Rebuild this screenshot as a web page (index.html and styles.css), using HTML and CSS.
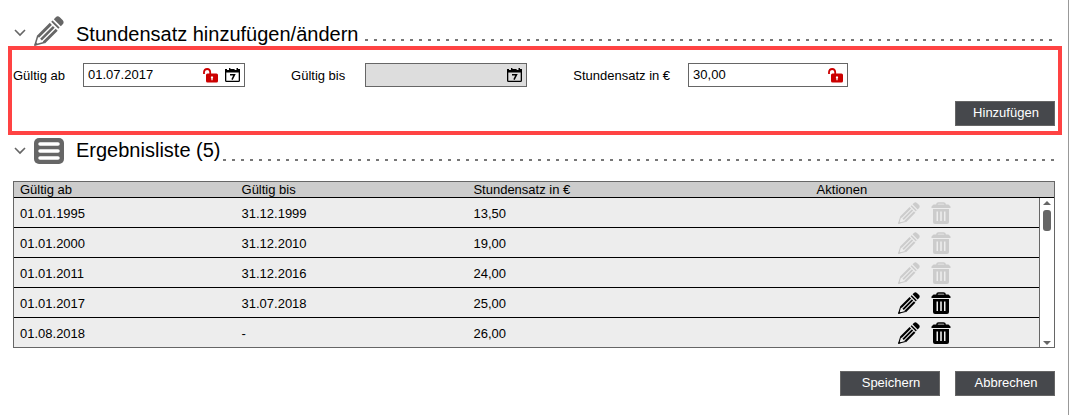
FILE: index.html
```html
<!DOCTYPE html>
<html lang="de">
<head>
<meta charset="utf-8">
<title>Stundensatz</title>
<link rel="stylesheet" href="styles.css">
</head>
<body>
<svg class="defs" aria-hidden="true">
  <symbol id="pencil" viewBox="0 0 30 30">
    <path fill="currentColor" d="M19.800 3.200 22 1Q23.800-.5 25.800 1.200L28.800 4.200Q30.300 6 29 8L26.800 10.200ZM18.600 4.400 25.600 11.400 24.300 12.800 17.200 5.700ZM15.800 6.800 17.900 8.900 5 21.800 2.900 19.700ZM18.900 9.900 20.700 11.700 7.900 24.500 6.100 22.700ZM21.700 12.700 23.700 14.700 10.900 27.500 8.800 25.400Z"/>
    <path fill="none" stroke="currentColor" stroke-width="1.500" stroke-linejoin="round" d="M3.700 20 1 29 10.200 26.600"/>
    <path fill="currentColor" d="M1.600 26 4 28.500 0 30Z"/>
  </symbol>
  <symbol id="trash" viewBox="0 0 20 22">
    <path fill="none" stroke="currentColor" stroke-width="1.500" d="M6 3V2Q6 1 7.500 1H12.500Q14 1 14 2V3"/>
    <path fill="currentColor" fill-rule="evenodd" d="M2.500 2.500H17.500L19.500 4.500V6H.500V4.500ZM2 7H18V20Q18 22 16 22H4Q2 22 2 20ZM5.500 9.500V19H7V9.500ZM9.200 9.500V19H10.800V9.500ZM13 9.500V19H14.500V9.500Z"/>
  </symbol>
  <symbol id="chevron" viewBox="0 0 12 8">
    <path fill="none" stroke="currentColor" stroke-width="1.600" d="M1 1 6 6 11 1"/>
  </symbol>
  <symbol id="lock" viewBox="0 0 15 15">
    <path fill="none" stroke="currentColor" stroke-width="1.800" d="M1 6V4Q1.300 1 4.200 1Q7 1 7.200 4V6"/>
    <path fill="currentColor" fill-rule="evenodd" d="M4.500 5.500H13.500Q15 5.500 15 7V13Q15 14.500 13.500 14.500H4.500Q3 14.500 3 13V7Q3 5.500 4.500 5.500ZM9 8.300A1.200 1.200 0 0 0 8.400 10.500V12.300H9.600V10.500A1.200 1.200 0 0 0 9 8.300Z"/>
  </symbol>
  <symbol id="calendar" viewBox="0 0 15 14">
    <path fill="currentColor" fill-rule="evenodd" d="M0 1H2V2H4V0H5.400V1H9.600V2H11.500V0H13V1H15V12.500Q15 14 13.500 14H1.500Q0 14 0 12.500ZM1.300 4.500V12.700H13.700V4.500Z"/>
    <path fill="none" stroke="currentColor" stroke-width="1.500" d="M5 6.700H9.500L7 11.700"/>
  </symbol>
</svg>
<main class="page">
  <header class="section-head">
    <button class="toggle" type="button" aria-label="Abschnitt einklappen"><svg><use href="#chevron"/></svg></button>
    <svg class="section-icon"><use href="#pencil"/></svg>
    <h2 class="title">Stundensatz hinzufügen/ändern</h2>
    <span class="dots dots-spaced"></span>
  </header>

  <form class="editor">
    <div class="fields">
      <label for="from">Gültig ab</label>
      <div class="field">
        <input id="from" type="text" value="01.07.2017">
        <svg class="lock"><use href="#lock"/></svg>
        <button class="pick" type="button" aria-label="Kalender"><svg><use href="#calendar"/></svg></button>
      </div>
      <label for="to">Gültig bis</label>
      <div class="field field-off">
        <input id="to" type="text" disabled>
        <button class="pick" type="button" aria-label="Kalender"><svg><use href="#calendar"/></svg></button>
      </div>
      <label for="rate">Stundensatz in €</label>
      <div class="field field-rate">
        <input id="rate" type="text" value="30,00">
        <svg class="lock"><use href="#lock"/></svg>
      </div>
    </div>
    <div class="buttons"><button class="btn" type="button">Hinzufügen</button></div>
  </form>

  <header class="section-head section-head-list">
    <button class="toggle" type="button" aria-label="Abschnitt einklappen"><svg><use href="#chevron"/></svg></button>
    <svg class="section-icon" viewBox="0 0 30 30">
      <rect x="0" y="2" width="30" height="26" rx="5" fill="#666"/>
      <path stroke="#fff" stroke-width="3.500" stroke-linecap="round" d="M6 8H24M6 15H24M6 22H24"/>
    </svg>
    <h2 class="title">Ergebnisliste (5)</h2>
    <span class="dots"></span>
  </header>

  <div class="list">
    <table class="rates">
      <thead>
        <tr><th class="col-from">Gültig ab</th><th class="col-to">Gültig bis</th><th class="col-rate">Stundensatz in €</th><th>Aktionen</th></tr>
      </thead>
      <tbody>
        <tr><td>01.01.1995</td><td>31.12.1999</td><td>13,50</td><td><div class="actions"><button type="button" disabled aria-label="Bearbeiten"><svg class="i-pencil"><use href="#pencil"/></svg></button><button type="button" disabled aria-label="Löschen"><svg class="i-trash"><use href="#trash"/></svg></button></div></td></tr>
        <tr><td>01.01.2000</td><td>31.12.2010</td><td>19,00</td><td><div class="actions"><button type="button" disabled aria-label="Bearbeiten"><svg class="i-pencil"><use href="#pencil"/></svg></button><button type="button" disabled aria-label="Löschen"><svg class="i-trash"><use href="#trash"/></svg></button></div></td></tr>
        <tr><td>01.01.2011</td><td>31.12.2016</td><td>24,00</td><td><div class="actions"><button type="button" disabled aria-label="Bearbeiten"><svg class="i-pencil"><use href="#pencil"/></svg></button><button type="button" disabled aria-label="Löschen"><svg class="i-trash"><use href="#trash"/></svg></button></div></td></tr>
        <tr><td>01.01.2017</td><td>31.07.2018</td><td>25,00</td><td><div class="actions"><button type="button" aria-label="Bearbeiten"><svg class="i-pencil"><use href="#pencil"/></svg></button><button type="button" aria-label="Löschen"><svg class="i-trash"><use href="#trash"/></svg></button></div></td></tr>
        <tr><td>01.08.2018</td><td>-</td><td>26,00</td><td><div class="actions"><button type="button" aria-label="Bearbeiten"><svg class="i-pencil"><use href="#pencil"/></svg></button><button type="button" aria-label="Löschen"><svg class="i-trash"><use href="#trash"/></svg></button></div></td></tr>
      </tbody>
    </table>
    <div class="scrollbar">
      <span class="arrow-up"></span>
      <span class="thumb"></span>
      <span class="arrow-down"></span>
    </div>
  </div>

  <div class="buttons buttons-page">
    <button class="btn" type="button">Speichern</button>
    <button class="btn" type="button">Abbrechen</button>
  </div>
</main>
</body>
</html>
```

FILE: styles.css
```css
* { box-sizing: border-box; }

body {
  margin: 0;
  background: #fff;
  color: #000;
  font: 13px/16px "Liberation Sans", Arial, sans-serif;
}

button, input { font: inherit; color: inherit; }
svg { display: block; }
.defs { position: absolute; width: 0; height: 0; }

.page {
  min-height: 100vh;
  padding: 14px 6px 0 8px;
  border-right: 1px solid #999;
}

/* section headings */
.section-head {
  display: flex;
  align-items: center;
  height: 32px;
  padding: 0 7px 0 6px;
}
.toggle {
  padding: 6px 0 0;
  border: 0;
  background: none;
  color: #666;
}
.toggle svg { width: 12px; height: 8px; }
.section-icon {
  width: 30px;
  height: 30px;
  margin: 2px 12px 0 8px;
  color: #666;
}
.title {
  margin: 8px 0 0;
  font-size: 20px;
  font-weight: 400;
  line-height: 24px;
}
.dots {
  flex: 1;
  align-self: flex-end;
  height: 2px;
  margin-bottom: 5px;
  margin-left: 2px;
  background: repeating-linear-gradient(90deg, #777 0 3px, transparent 3px 9px);
}
.dots-spaced { margin-left: 7px; }
.section-head-list { height: 31px; }
.section-head-list .toggle { padding-top: 0; }
.section-head-list .title { margin-top: -2px; }
.section-head-list .section-icon { margin-top: 0; }

/* entry form */
.editor {
  padding: 13px 3px 5px 1px;
  border: 4px solid #ff4343;
}
.fields {
  display: flex;
  align-items: center;
}
.fields label {
  flex: none;
  margin-right: 18px;
  padding-top: 2px;
}
.fields .field + label { margin-left: 46px; }
.fields label:nth-of-type(2) { margin-right: 20px; }
.field {
  display: flex;
  align-items: center;
  width: 162px;
  height: 24px;
  padding: 0 4px;
  gap: 7px;
  border: 1px solid #666;
  background: #fff;
}
.field-off { background: #ddd; }
.field-rate { width: 160px; }
.field input {
  flex: 1;
  min-width: 0;
  padding: 0;
  border: 0;
  outline: 0;
  background: none;
}
.lock { width: 15px; height: 15px; color: #c00; }
.pick { padding: 0; border: 0; background: none; }
.pick svg { width: 15px; height: 14px; }

/* buttons */
.buttons {
  display: flex;
  justify-content: flex-end;
  gap: 15px;
  margin-top: 14px;
}
.buttons-page { margin: 23px 7px 0 0; }
.btn {
  width: 100px;
  height: 25px;
  padding: 0 0 2px 2px;
  border: 1px solid #666;
  background: #46484c;
  color: #fff;
}

/* result list */
.list {
  position: relative;
  margin: 16px 7px 0 5px;
  margin-top: 15px;
  border: 1px solid #666;
}
.rates {
  width: 100%;
  border-spacing: 0;
  table-layout: fixed;
}
.rates th {
  height: 16px;
  padding: 0 6px;
  background: #ccc;
  border-bottom: 1px solid #000;
  font-weight: 400;
  line-height: 15px;
  text-align: left;
}
.col-from { width: 21.3%; }
.col-to { width: 22.3%; }
.col-rate { width: 33%; }
.rates td {
  height: 30px;
  padding: 2px 6px 0;
  background: #ededed;
  border-bottom: 1px solid #000;
}
.rates tbody tr:last-child td { height: 29px; border-bottom: 0; }
.rates td:last-child { padding-top: 0; }
.actions {
  display: flex;
  align-items: center;
  justify-content: center;
  gap: 11px;
  padding-right: 15px;
}
.actions button { padding: 0; border: 0; background: none; }
.actions button:disabled { color: #ccc; }
.i-pencil { width: 22px; height: 22px; }
.i-trash { width: 20px; height: 22px; }

/* scrollbar lies over the right edge of the table body */
.scrollbar {
  position: absolute;
  top: 16px;
  right: 0;
  bottom: 0;
  width: 15px;
  display: flex;
  flex-direction: column;
  align-items: center;
  padding: 3px 0 2px;
  border-left: 1px solid #666;
  background: #fff;
}
.arrow-up, .arrow-down {
  border: 4px solid transparent;
  border-top-width: 0;
  border-bottom: 4px solid #666;
}
.arrow-down {
  margin-top: auto;
  border-top: 4px solid #666;
  border-bottom-width: 0;
}
.thumb {
  width: 8px;
  height: 21px;
  margin-top: 5px;
  border-radius: 3px;
  background: #666;
}
```
